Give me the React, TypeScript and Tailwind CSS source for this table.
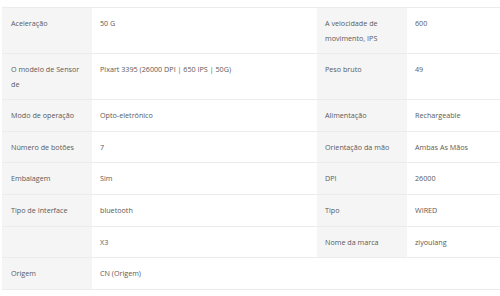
const rows: [string, string, string?, string?][] = [
  ["Aceleração", "50 G", "A velocidade de movimento, IPS", "600"],
  ["O modelo de Sensor de", "Pixart 3395 (26000 DPI | 650 IPS | 50G)", "Peso bruto", "49"],
  ["Modo de operação", "Opto-eletrônico", "Alimentação", "Rechargeable"],
  ["Número de botões", "7", "Orientação da mão", "Ambas As Mãos"],
  ["Embalagem", "Sim", "DPI", "26000"],
  ["Tipo de Interface", "bluetooth", "Tipo", "WIRED"],
  ["", "X3", "Nome da marca", "ziyoulang"],
  ["Origem", "CN (Origem)"],
]

export default function App() {
  return (
    <div
      className="w-[500px] h-[296px] bg-white pt-[7px] pl-[2px] text-[7.2px] leading-[15px] text-[#5a5a5a]"
      style={{ fontFamily: '"Open Sans", sans-serif' }}
    >
      <div className="border-t border-[#ececec]">
        {rows.map((r, i) => (
          <div
            key={i}
            className="grid grid-cols-[90px_225px_90px_1fr] min-h-[31.7px] border-b border-[#ececec]"
          >
            <div className="bg-[#f5f5f5] pl-[9px] pr-2 pt-2 pb-[7px]">{r[0]}</div>
            <div className="pl-2 pr-2 pt-2 pb-[7px]">{r[1]}</div>
            {r[2] !== undefined ? (
              <>
                <div className="bg-[#f5f5f5] pl-2 pr-2 pt-2 pb-[7px]">{r[2]}</div>
                <div className="pl-2 pr-2 pt-2 pb-[7px]">{r[3]}</div>
              </>
            ) : (
              <div className="col-span-2" />
            )}
          </div>
        ))}
      </div>
    </div>
  )
}
